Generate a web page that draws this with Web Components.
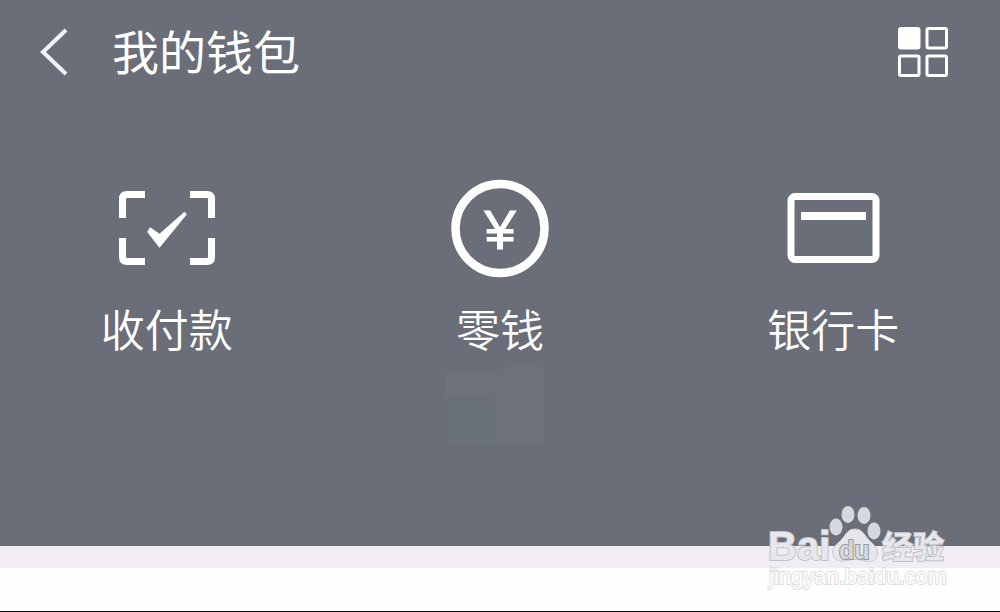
<!DOCTYPE html>
<html lang="zh-CN">
<head>
<meta charset="utf-8">
<meta name="viewport" content="width=device-width, initial-scale=1">
<title>我的钱包</title>
<style>
  body { margin: 0; font-family: "Noto Sans CJK SC", sans-serif; }
</style>
</head>
<body>
<wallet-page>
  <wallet-header slot="header">我的钱包</wallet-header>
  <wallet-action slot="actions" icon="pay">收付款</wallet-action>
  <wallet-action slot="actions" icon="change">零钱</wallet-action>
  <wallet-action slot="actions" icon="card">银行卡</wallet-action>
  <site-watermark slot="mark"></site-watermark>
</wallet-page>

<template id="page-template">
  <style>
    :host { display: flex; flex-direction: column; min-height: 100vh; box-sizing: border-box; position: relative; background: #fefefe; border-bottom: 1px solid #0c0c0c; }
    .panel { background: #6a6e79; color: #fff; padding-bottom: 90px; }
    nav { display: grid; grid-template-columns: repeat(3, 1fr); padding-top: 74px; }
    .balance { display: block; margin: 0 auto; }
    .strip { height: 22px; background: #f0eef4; }
    .mark { position: absolute; right: 50px; bottom: 16px; }
  </style>
  <section class="panel">
    <slot name="header"></slot>
    <nav><slot name="actions"></slot></nav>
    <svg class="balance" width="320" height="96" viewBox="0 0 320 96" aria-hidden="true">
      <rect x="47" y="17" width="266" height="74" rx="36" fill="#6a6c77"/>
      <path d="M105 11h48l36-9q12-2 15 0v83h-99z" fill="#6e707b"/>
      <path d="M105 37h49v48h-49z" fill="#69707a"/>
    </svg>
  </section>
  <div class="strip"></div>
  <div class="mark"><slot name="mark"></slot></div>
</template>

<template id="header-template">
  <style>
    :host { display: block; }
    header { display: flex; align-items: center; height: 104px; padding: 0 52px 0 40px; }
    button { display: block; padding: 0; border: 0; background: none; color: inherit; cursor: pointer; }
    svg { display: block; }
    h1 { flex: 1; margin: 0 0 4px 44px; font-size: 47px; line-height: 64px; font-weight: 400; }
  </style>
  <header>
    <button type="button" aria-label="返回">
      <svg width="28" height="48" viewBox="0 0 28 48" fill="none" stroke="#f2f2fa" stroke-width="4"><path d="M26 2 3 24 26 46"/></svg>
    </button>
    <h1><slot></slot></h1>
    <button type="button" aria-label="更多">
      <svg width="50" height="50" viewBox="0 0 50 50" fill="none" stroke="#fff" stroke-width="3">
        <rect x="1.500" y="1.500" width="19.500" height="19.500" rx="1.500" fill="#fff"/>
        <rect x="29" y="1.500" width="19.500" height="19.500" rx="1.500"/>
        <rect x="1.500" y="29" width="19.500" height="19.500" rx="1.500"/>
        <rect x="29" y="29" width="19.500" height="19.500" rx="1.500"/>
      </svg>
    </button>
  </header>
</template>

<template id="action-template">
  <style>
    :host { display: block; }
    button { display: flex; flex-direction: column; align-items: center; gap: 18px; width: 100%; padding: 0; border: 0; background: none; color: inherit; font-family: inherit; font-size: 44px; font-weight: 350; line-height: 64px; cursor: pointer; }
    svg { display: none; }
    :host([icon="pay"]) .pay, :host([icon="change"]) .change, :host([icon="card"]) .card { display: block; }
    text { font: 400 56px "Liberation Sans", sans-serif; }
  </style>
  <button type="button">
    <svg class="pay" width="100" height="100" viewBox="0 0 100 100" aria-hidden="true">
      <path d="M28 16.500H10q-4.500 0-4.500 4.500V40M73 16.500H90q4.500 0 4.500 4.500V40M5.500 60V79q0 4.500 4.500 4.500H28M94.500 60V79q0 4.500-4.500 4.500H73" fill="none" stroke="#fff" stroke-width="7"/>
      <path d="M33 49.500 42.500 56 67.500 34 69.500 36.500 42.500 69.500 30.500 54z" fill="#fff" stroke="#fff" stroke-width=".5" stroke-linejoin="round"/>
    </svg>
    <svg class="change" width="100" height="100" viewBox="0 0 100 100" aria-hidden="true">
      <circle cx="50" cy="50.500" r="44.500" fill="none" stroke="#fff" stroke-width="8.500"/>
      <text x="50" y="71" text-anchor="middle" fill="#fff" stroke="#fff" stroke-width="1">¥</text>
    </svg>
    <svg class="card" width="100" height="100" viewBox="0 0 100 100" aria-hidden="true">
      <rect x="8" y="18.500" width="85" height="63" rx="4" fill="none" stroke="#fff" stroke-width="7"/>
      <path d="M18 34h65v8H18z" fill="#fff"/>
    </svg>
    <span><slot></slot></span>
  </button>
</template>

<template id="mark-template">
  <style>
    :host { display: block; width: 182px; }
    a { display: block; text-decoration: none; }
    svg { display: block; overflow: visible; }
    text { paint-order: stroke; stroke: #c0c2c7; stroke-width: 2px; fill: #e8e8ec; }
    .bai { font: 700 40px "Liberation Sans", sans-serif; }
    .du { font: 700 25px "Liberation Sans", sans-serif; fill: #d5d7da; stroke: #989ba2; }
    .cn { font: 700 31px "Noto Sans CJK SC", sans-serif; }
    .url { font: 400 22px "Liberation Sans", sans-serif; fill: #fff; stroke: #dedee1; }
  </style>
  <a href="#" aria-label="百度经验">
    <svg width="182" height="90" viewBox="0 0 182 90">
      <g fill="#d5d8dc">
        <ellipse cx="68" cy="22" rx="6.500" ry="8.500"/>
        <ellipse cx="80" cy="9.500" rx="6.500" ry="8.500"/>
        <ellipse cx="96" cy="10.500" rx="6.500" ry="8.500"/>
        <ellipse cx="106" cy="26" rx="6.500" ry="8.500"/>
      </g>
      <path d="M87 24c7 0 9 5 13 10 4 5 9.500 7 9.500 14 0 7-6.500 10-12.500 8-7-2-13-2-20 0-7 1-12.500-2-12.500-9 0-6 6.500-9 9.500-13 4-5 6-10 13-10z" fill="#e6e7eb" stroke="#c6c8cd"/>
      <text class="bai" x="0" y="55">Bai</text>
      <text class="du" x="71" y="54">du</text>
      <text class="cn" x="114" y="53">经验</text>
      <text class="url" x="1" y="79">jingyan.baidu.com</text>
    </svg>
  </a>
</template>

<script>
  function define(name, templateId) {
    customElements.define(name, class extends HTMLElement {
      constructor() {
        super();
        const template = document.getElementById(templateId);
        this.attachShadow({ mode: 'open' }).append(template.content.cloneNode(true));
      }
    });
  }
  define('wallet-page', 'page-template');
  define('wallet-header', 'header-template');
  define('wallet-action', 'action-template');
  define('site-watermark', 'mark-template');
</script>
</body>
</html>
